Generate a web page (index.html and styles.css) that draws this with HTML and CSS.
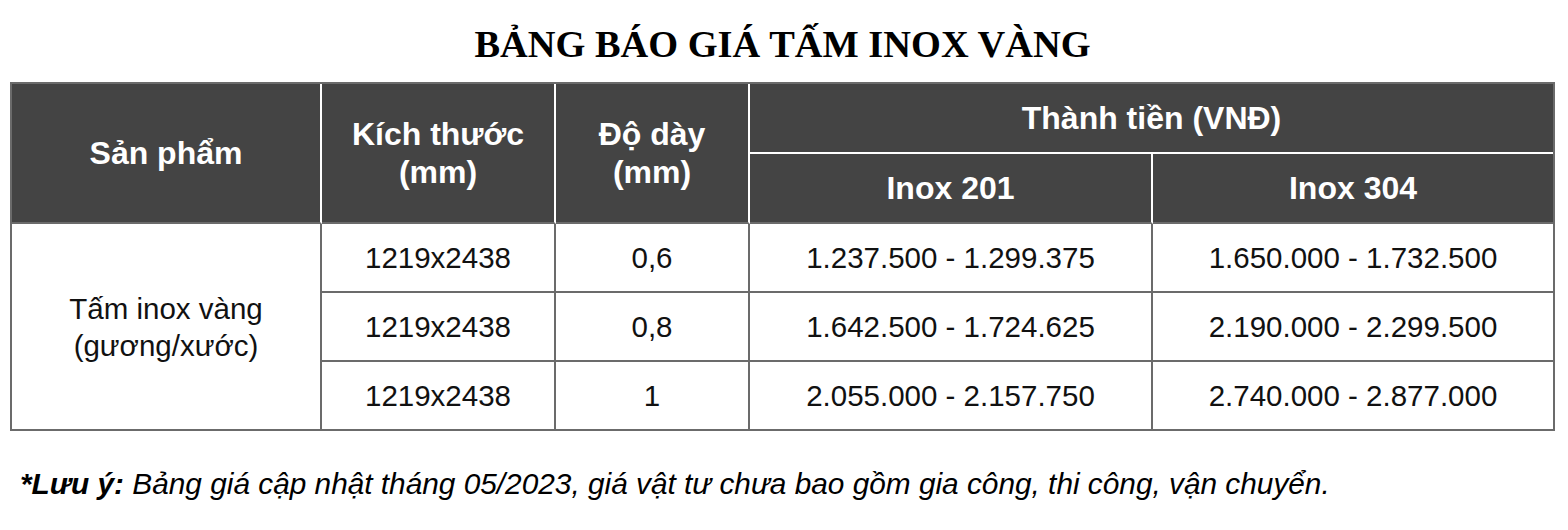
FILE: index.html
```
<!DOCTYPE html>
<html lang="vi">
<head>
<meta charset="utf-8">
<title>Bảng báo giá tấm inox vàng</title>
<link rel="stylesheet" href="styles.css">
</head>
<body>
<div class="page">
  <h1 class="title">BẢNG BÁO GIÁ TẤM INOX VÀNG</h1>
  <table class="price">
    <colgroup>
      <col class="c1"><col class="c2"><col class="c3"><col class="c4"><col class="c5">
    </colgroup>
    <thead>
      <tr>
        <th rowspan="2" class="hb">Sản phẩm</th>
        <th rowspan="2" class="hb">Kích thước<br>(mm)</th>
        <th rowspan="2" class="hb">Độ dày<br>(mm)</th>
        <th colspan="2" class="last">Thành tiền (VNĐ)</th>
      </tr>
      <tr>
        <th class="hb">Inox 201</th>
        <th class="hb last">Inox 304</th>
      </tr>
    </thead>
    <tbody>
      <tr>
        <td rowspan="3" class="bottom">Tấm inox vàng<br>(gương/xước)</td>
        <td>1219x2438</td>
        <td>0,6</td>
        <td>1.237.500 - 1.299.375</td>
        <td class="last">1.650.000 - 1.732.500</td>
      </tr>
      <tr>
        <td>1219x2438</td>
        <td>0,8</td>
        <td>1.642.500 - 1.724.625</td>
        <td class="last">2.190.000 - 2.299.500</td>
      </tr>
      <tr>
        <td class="bottom">1219x2438</td>
        <td class="bottom">1</td>
        <td class="bottom">2.055.000 - 2.157.750</td>
        <td class="bottom last">2.740.000 - 2.877.000</td>
      </tr>
    </tbody>
  </table>
  <p class="note"><b>*Lưu ý:</b> Bảng giá cập nhật tháng 05/2023, giá vật tư chưa bao gồm gia công, thi công, vận chuyển.</p>
</div>
</body>
</html>
```
FILE: styles.css
```
html, body {
  margin: 0;
  padding: 0;
  background: #ffffff;
}

.page {
  padding: 22px 0 0 10px;
  width: 1545px;
}

.title {
  margin: 0 0 16px 0;
  font-family: "Liberation Serif", "Times New Roman", serif;
  font-weight: bold;
  font-size: 38.4px;
  line-height: 44px;
  text-align: center;
  color: #000;
}

.price {
  width: 1545px;
  border-collapse: separate;
  border-spacing: 0;
  border: 2px solid #6b6b6b;
  table-layout: fixed;
}

.c1 { width: 310px; }
.c2 { width: 234px; }
.c3 { width: 194px; }
.c4 { width: 403px; }
.c5 { width: 400px; }

.price th {
  background: #444444;
  color: #ffffff;
  font-family: "Liberation Sans", Arial, sans-serif;
  font-weight: bold;
  font-size: 32px;
  line-height: 38px;
  height: 68px;
  padding: 0;
  text-align: center;
  vertical-align: middle;
  border-right: 2px solid #ffffff;
  border-bottom: 2px solid #ffffff;
}

.price th.hb {
  border-bottom-color: #6b6b6b;
}

.price td {
  font-family: "Liberation Sans", Arial, sans-serif;
  font-size: 29.5px;
  line-height: 37px;
  color: #111111;
  height: 67px;
  padding: 0;
  text-align: center;
  vertical-align: middle;
  border-right: 2px solid #6b6b6b;
  border-bottom: 2px solid #6b6b6b;
}

.price .last {
  border-right: 0;
}

.price td.bottom {
  border-bottom: 0;
}

.note {
  margin: 36px 0 0 10px;
  font-family: "Liberation Sans", Arial, sans-serif;
  font-style: italic;
  font-size: 29.8px;
  line-height: 34px;
  color: #000;
}

.note b {
  font-weight: bold;
}
```
